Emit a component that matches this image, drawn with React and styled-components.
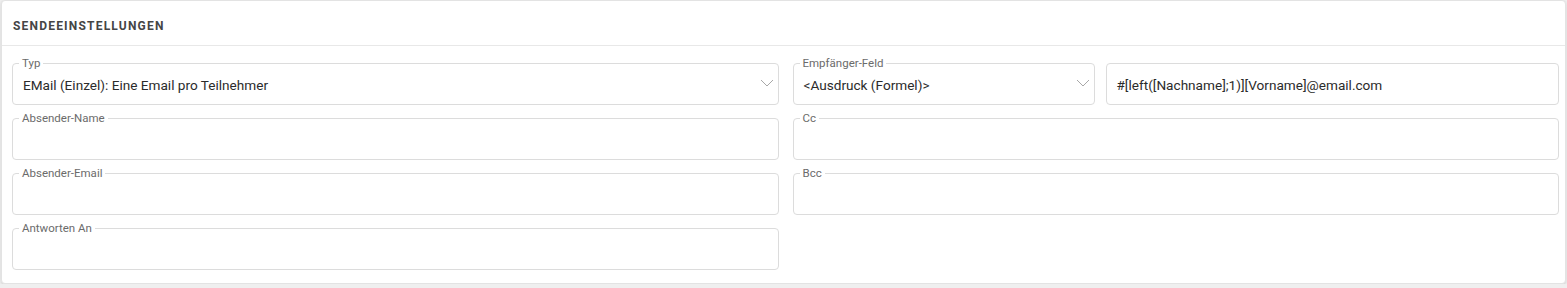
import React from "react";
import styled, { createGlobalStyle } from "styled-components";

const GlobalStyle = createGlobalStyle`
  body {
    margin: 0;
    background: #efefef;
    font-family: "Roboto", "Liberation Sans", sans-serif;
  }
`;

const Card = styled.section`
  margin: 0 1px;
  background: #ffffff;
  border: 1px solid #e3e3e3;
  border-radius: 4px;
  box-shadow: 0 1px 3px rgba(0, 0, 0, 0.12);
  height: 284px;
  box-sizing: border-box;
`;

const CardHeader = styled.div`
  height: 44px;
  border-bottom: 1px solid #e8e8e8;
  display: flex;
  align-items: center;
  padding: 0 11px;
`;

const Title = styled.h2`
  margin: 5px 0 0;
  font-size: 12px;
  font-weight: 700;
  letter-spacing: 1.2px;
  color: #454545;
  text-transform: uppercase;
`;

const Body = styled.div`
  display: grid;
  grid-template-columns: 1fr 1fr;
  grid-auto-rows: 48px;
  column-gap: 14px;
  row-gap: 7px;
  padding: 11px 6px 0 10px;
`;

const Row = styled.div`
  display: flex;
  gap: 11px;
  min-width: 0;
`;

const Field = styled.fieldset`
  margin: 0;
  padding: 0 10px;
  border: 1px solid #dcdcdc;
  border-radius: 4px;
  height: 48px;
  box-sizing: border-box;
  position: relative;
  min-width: 0;
  flex: ${(p) => (p.$width ? `0 0 ${p.$width}px` : "1 1 auto")};
`;

const Legend = styled.legend`
  margin-left: -4px;
  padding: 0 3px;
  font-size: 11.5px;
  line-height: 12px;
  color: #6b6b6b;
`;

const Value = styled.div`
  margin-top: 8px;
  font-size: 13.6px;
  line-height: 16px;
  color: #2b2b2b;
  white-space: nowrap;
`;

const PlainBox = styled.div`
  margin-top: 6px;
  height: 42px;
  box-sizing: border-box;
  border: 1px solid #dcdcdc;
  border-radius: 4px;
  padding: 2px 10px 0;
  display: flex;
  align-items: center;
  flex: 1 1 auto;
  min-width: 0;
  font-size: 13.6px;
  color: #2b2b2b;
  white-space: nowrap;
`;

const Chevron = styled.svg`
  position: absolute;
  right: 4px;
  top: 10px;
`;

const Arrow = () => (
  <Chevron width="14" height="8" viewBox="0 0 14 8">
    <path d="M1 1l6 6 6-6" fill="none" stroke="#a8a8a8" strokeWidth="1" />
  </Chevron>
);

const Input = ({ label, value, select, width }) => (
  <Field $width={width}>
    <Legend>{label}</Legend>
    <Value>{value}</Value>
    {select ? <Arrow /> : null}
  </Field>
);

export default function App() {
  return (
    <>
      <GlobalStyle />
      <Card>
        <CardHeader>
          <Title>Sendeeinstellungen</Title>
        </CardHeader>
        <Body>
          <Input label="Typ" value="EMail (Einzel): Eine Email pro Teilnehmer" select />
          <Row>
            <Input label="Empfänger-Feld" value="<Ausdruck (Formel)>" select width={302} />
            <PlainBox>#[left([Nachname];1)][Vorname]@email.com</PlainBox>
          </Row>
          <Input label="Absender-Name" />
          <Input label="Cc" />
          <Input label="Absender-Email" />
          <Input label="Bcc" />
          <Input label="Antworten An" />
        </Body>
      </Card>
    </>
  );
}
